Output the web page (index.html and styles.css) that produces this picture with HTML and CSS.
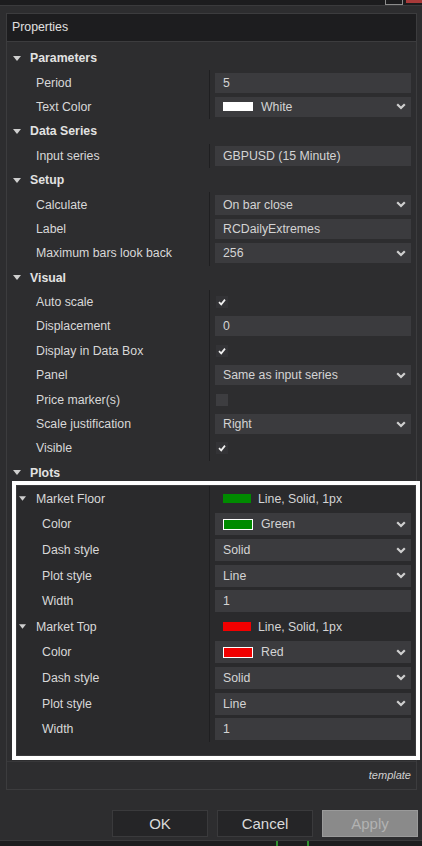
FILE: index.html
```html
<!DOCTYPE html>
<html lang="en">
<head>
    <meta charset="UTF-8">
    <meta name="viewport" content="width=device-width, initial-scale=1.0">
    <title>Properties</title>
    <link rel="stylesheet" href="styles.css">
</head>
<body>
    <div class="topbar">
        <span class="win-btn"></span>
        <span class="win-close"></span>
    </div>

    <div class="panel">
        <div class="panel-title">Properties</div>

        <div class="grid">
            <!-- Parameters -->
            <div class="cat"><svg class="tri" viewBox="0 0 8 5"><polygon points="0,0 8,0 4,5"/></svg>Parameters</div>
            <div class="row"><div class="name">Period</div><div class="value"><div class="box"><span class="txt">5</span></div></div></div>
            <div class="row"><div class="name">Text Color</div><div class="value"><div class="box"><span class="swatch white"></span><span class="txt">White</span><svg class="chev" viewBox="0 0 10 7"><polyline points="1.2,1.2 5,5 8.8,1.2"/></svg></div></div></div>

            <!-- Data Series -->
            <div class="cat"><svg class="tri" viewBox="0 0 8 5"><polygon points="0,0 8,0 4,5"/></svg>Data Series</div>
            <div class="row"><div class="name">Input series</div><div class="value"><div class="box"><span class="txt">GBPUSD (15 Minute)</span></div></div></div>

            <!-- Setup -->
            <div class="cat"><svg class="tri" viewBox="0 0 8 5"><polygon points="0,0 8,0 4,5"/></svg>Setup</div>
            <div class="row"><div class="name">Calculate</div><div class="value"><div class="box"><span class="txt">On bar close</span><svg class="chev" viewBox="0 0 10 7"><polyline points="1.2,1.2 5,5 8.8,1.2"/></svg></div></div></div>
            <div class="row"><div class="name">Label</div><div class="value"><div class="box"><span class="txt">RCDailyExtremes</span></div></div></div>
            <div class="row"><div class="name">Maximum bars look back</div><div class="value"><div class="box"><span class="txt">256</span><svg class="chev" viewBox="0 0 10 7"><polyline points="1.2,1.2 5,5 8.8,1.2"/></svg></div></div></div>

            <!-- Visual -->
            <div class="cat"><svg class="tri" viewBox="0 0 8 5"><polygon points="0,0 8,0 4,5"/></svg>Visual</div>
            <div class="row"><div class="name">Auto scale</div><div class="value"><span class="check"><svg viewBox="0 0 12 12"><polyline points="3,6.2 5.2,8.4 9,3.6"/></svg></span></div></div>
            <div class="row"><div class="name">Displacement</div><div class="value"><div class="box"><span class="txt">0</span></div></div></div>
            <div class="row"><div class="name">Display in Data Box</div><div class="value"><span class="check"><svg viewBox="0 0 12 12"><polyline points="3,6.2 5.2,8.4 9,3.6"/></svg></span></div></div>
            <div class="row"><div class="name">Panel</div><div class="value"><div class="box"><span class="txt">Same as input series</span><svg class="chev" viewBox="0 0 10 7"><polyline points="1.2,1.2 5,5 8.8,1.2"/></svg></div></div></div>
            <div class="row"><div class="name">Price marker(s)</div><div class="value"><span class="check empty"></span></div></div>
            <div class="row"><div class="name">Scale justification</div><div class="value"><div class="box"><span class="txt">Right</span><svg class="chev" viewBox="0 0 10 7"><polyline points="1.2,1.2 5,5 8.8,1.2"/></svg></div></div></div>
            <div class="row"><div class="name">Visible</div><div class="value"><span class="check"><svg viewBox="0 0 12 12"><polyline points="3,6.2 5.2,8.4 9,3.6"/></svg></span></div></div>

            <!-- Plots -->
            <div class="cat"><svg class="tri" viewBox="0 0 8 5"><polygon points="0,0 8,0 4,5"/></svg>Plots</div>
        </div>

        <div class="plots">
            <div class="prow phead"><div class="name"><svg class="tri small" viewBox="0 0 8 5"><polygon points="0,0 8,0 4,5"/></svg>Market Floor</div><div class="value"><div class="plain"><span class="swatch line green"></span><span class="txt">Line, Solid, 1px</span></div></div></div>
            <div class="prow"><div class="name">Color</div><div class="value"><div class="box"><span class="swatch outlined green"></span><span class="txt">Green</span><svg class="chev" viewBox="0 0 10 7"><polyline points="1.2,1.2 5,5 8.8,1.2"/></svg></div></div></div>
            <div class="prow"><div class="name">Dash style</div><div class="value"><div class="box"><span class="txt">Solid</span><svg class="chev" viewBox="0 0 10 7"><polyline points="1.2,1.2 5,5 8.8,1.2"/></svg></div></div></div>
            <div class="prow"><div class="name">Plot style</div><div class="value"><div class="box"><span class="txt">Line</span><svg class="chev" viewBox="0 0 10 7"><polyline points="1.2,1.2 5,5 8.8,1.2"/></svg></div></div></div>
            <div class="prow"><div class="name">Width</div><div class="value"><div class="box"><span class="txt">1</span></div></div></div>

            <div class="prow phead"><div class="name"><svg class="tri small" viewBox="0 0 8 5"><polygon points="0,0 8,0 4,5"/></svg>Market Top</div><div class="value"><div class="plain"><span class="swatch line red"></span><span class="txt">Line, Solid, 1px</span></div></div></div>
            <div class="prow"><div class="name">Color</div><div class="value"><div class="box"><span class="swatch outlined red"></span><span class="txt">Red</span><svg class="chev" viewBox="0 0 10 7"><polyline points="1.2,1.2 5,5 8.8,1.2"/></svg></div></div></div>
            <div class="prow"><div class="name">Dash style</div><div class="value"><div class="box"><span class="txt">Solid</span><svg class="chev" viewBox="0 0 10 7"><polyline points="1.2,1.2 5,5 8.8,1.2"/></svg></div></div></div>
            <div class="prow"><div class="name">Plot style</div><div class="value"><div class="box"><span class="txt">Line</span><svg class="chev" viewBox="0 0 10 7"><polyline points="1.2,1.2 5,5 8.8,1.2"/></svg></div></div></div>
            <div class="prow"><div class="name">Width</div><div class="value"><div class="box"><span class="txt">1</span></div></div></div>
        </div>

        <div class="template">template</div>
    </div>

    <div class="buttons">
        <button class="btn">OK</button>
        <button class="btn">Cancel</button>
        <button class="btn disabled">Apply</button>
    </div>

    <div class="bottombar">
        <span class="mark"></span>
        <span class="mark"></span>
    </div>
</body>
</html>
```

FILE: styles.css
```css
body {
    margin: 0;
    width: 422px;
    height: 846px;
    overflow: hidden;
    background-color: #2d2d2f;
    font-family: "Liberation Sans", Arial, sans-serif;
    font-size: 12.3px;
    color: #d8d8d8;
}

* {
    box-sizing: border-box;
}

/* window strip at the very top */
.topbar {
    height: 6px;
    background: #1c1c1e;
    border-bottom: 1px solid #3a3a3c;
    display: flex;
    justify-content: flex-end;
    align-items: flex-start;
}

.win-btn {
    width: 18px;
    height: 5px;
    border: 1px solid #8c8c8c;
    border-top: none;
    margin-right: 3px;
}

.win-close {
    width: 16px;
    height: 3px;
    background: #a83a3a;
}

/* main properties panel */
.panel {
    margin: 7px 5px 0 6px;
    border: 1px solid #3c3c3e;
}

.panel-title {
    height: 28px;
    line-height: 27px;
    padding-left: 5px;
    background: #1d1d1f;
    border-bottom: 1px solid #3c3c3e;
    color: #e0e0e0;
}

.grid {
    padding-top: 4px;
}

.cat {
    height: 24.4px;
    display: flex;
    align-items: center;
    padding-left: 6px;
    font-weight: bold;
    color: #e2e2e2;
}

.tri {
    width: 8px;
    height: 5px;
    margin-right: 9px;
    fill: #cfcfcf;
}

.tri.small {
    width: 7px;
    height: 5px;
    margin-right: 10px;
}

.row {
    height: 24.4px;
    display: flex;
}

.name {
    width: 203px;
    padding-left: 29px;
    border-right: 1px solid #1f1f21;
    display: flex;
    align-items: center;
    white-space: nowrap;
}

.value {
    flex: 1;
    padding: 0 5px;
    display: flex;
    align-items: center;
}

.box {
    flex: 1;
    height: 20px;
    background: #3b3b3e;
    display: flex;
    align-items: center;
    padding: 0 5px 0 8px;
    color: #d4d4d4;
}

.plain {
    flex: 1;
    display: flex;
    align-items: center;
    padding-left: 8px;
    color: #d4d4d4;
}

.txt {
    flex: 1;
    white-space: nowrap;
}

.chev {
    width: 10px;
    height: 7px;
    fill: none;
    stroke: #cfcfcf;
    stroke-width: 2.2;
}

.swatch {
    width: 30px;
    height: 9px;
    margin-right: 8px;
}

.swatch.white {
    background: #ffffff;
}

.swatch.line {
    width: 28px;
    margin-right: 7px;
}

.swatch.outlined {
    height: 11px;
    border: 1px solid #ffffff;
}

.green {
    background: #008a00;
}

.red {
    background: #f20000;
}

.check {
    width: 12px;
    height: 12px;
    margin-left: 1px;
    background: #333336;
    display: flex;
}

.check svg {
    width: 12px;
    height: 12px;
    fill: none;
    stroke: #f0f0f0;
    stroke-width: 1.7;
}

.check.empty {
    background: #3d3d40;
}

/* plots block with white highlight frame */
.plots {
    margin-left: 9px;
    border: 1px solid #3a3a3c;
    background: #2a2a2c;
    outline: 4px solid #ffffff;
    padding-bottom: 13px;
}

.prow {
    height: 25.6px;
    display: flex;
}

.prow .name {
    width: 193px;
    padding-left: 25px;
}

.prow.phead .name {
    padding-left: 2px;
}

.prow .value {
    padding: 0 4px 0 5px;
}

.prow .box {
    height: 22px;
}

.template {
    height: 28px;
    margin-top: 5px;
    border-top: 1px solid #38383a;
    display: flex;
    align-items: center;
    justify-content: flex-end;
    padding-right: 5px;
    font-style: italic;
    font-size: 11px;
    color: #d0d0d0;
}

/* dialog buttons */
.buttons {
    display: flex;
    justify-content: flex-end;
    gap: 9px;
    margin-top: 20px;
    padding-right: 4px;
}

.btn {
    width: 96px;
    height: 27px;
    background: #252527;
    border: 1px solid #3a3a3c;
    color: #dadada;
    font-family: "Liberation Sans", Arial, sans-serif;
    font-size: 15px;
    padding: 0;
}

.btn.disabled {
    background: #8a8a8a;
    border-color: #9a9a9a;
    color: #b2b2b2;
}

.bottombar {
    margin-top: 3px;
    height: 6px;
    background: #1d1d1f;
    border-top: 1px solid #3a3a3c;
    display: flex;
    gap: 29px;
    padding-left: 276px;
}

.mark {
    width: 2px;
    height: 5px;
    background: #2f8f2f;
}
```
